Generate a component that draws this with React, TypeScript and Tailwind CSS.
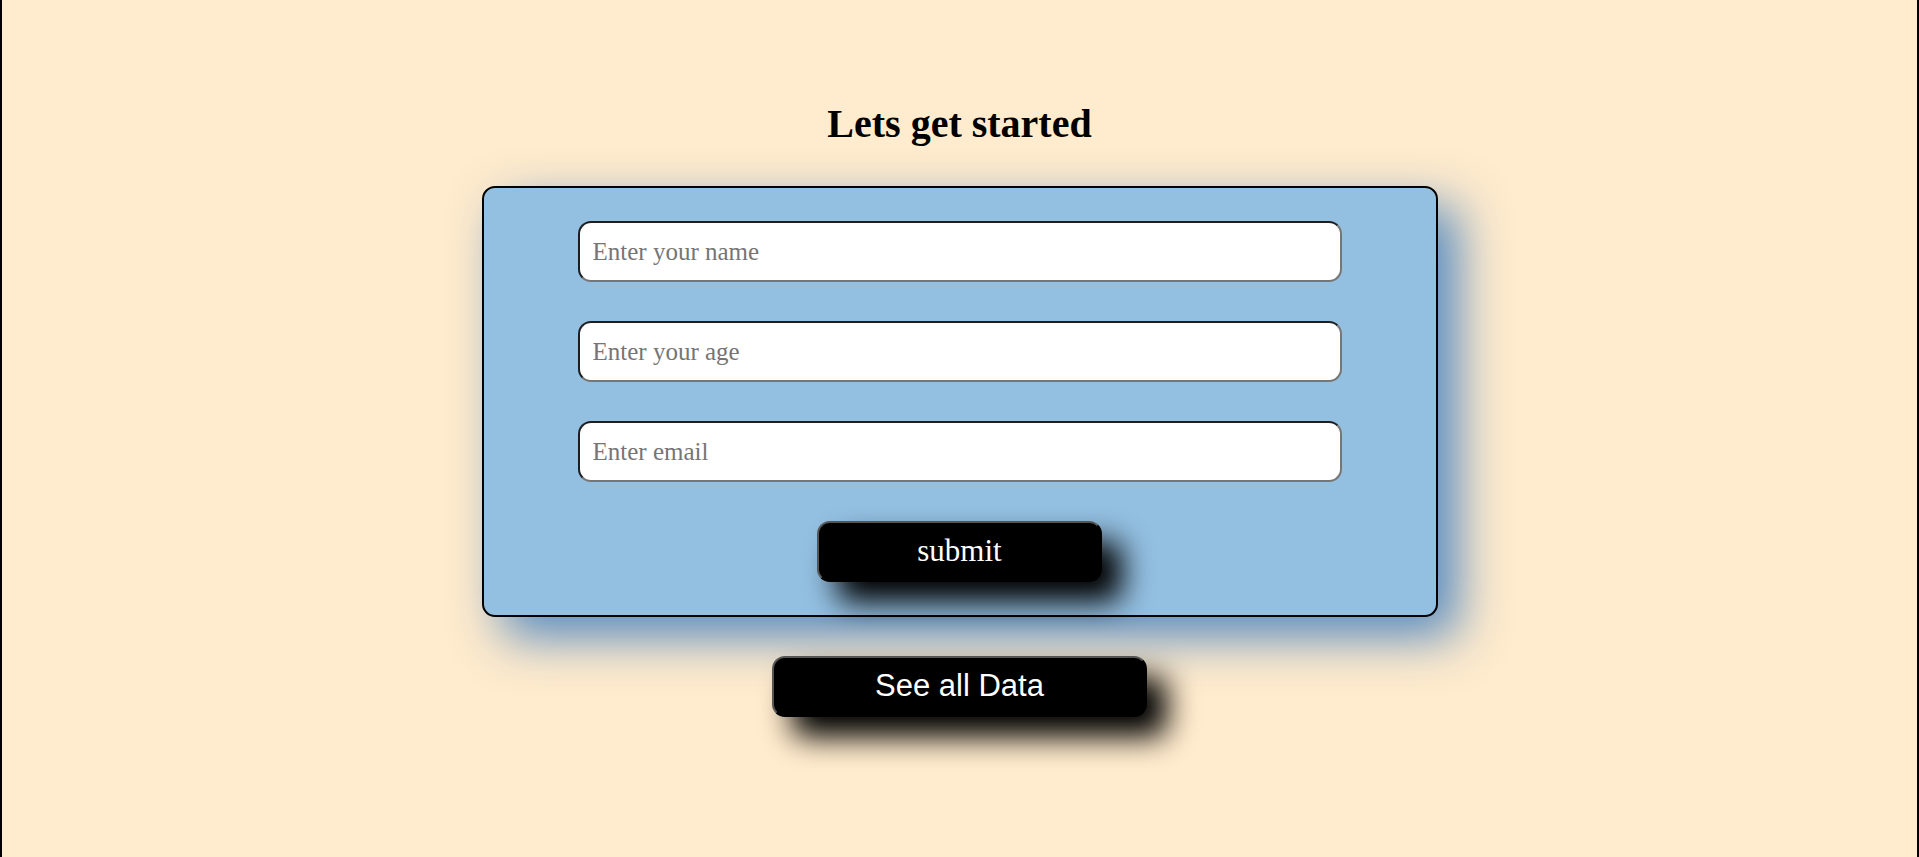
import React from 'react';

const inputClass =
  "w-[764px] h-[61px] rounded-[13px] border-2 border-solid border-t-[#1e1e1e] border-l-[#1e1e1e] border-b-[#767676] border-r-[#767676] bg-white pl-[13px] text-[25px] text-black placeholder:text-[#757575] outline-none font-['Liberation_Serif',serif]";

export default function App() {
  return (
    <div className="min-h-screen w-full bg-[#ffebcd] border-x-2 border-black flex flex-col items-center pt-[101px]">
      <h1 className="h-[46px] leading-[46px] text-[40px] font-bold text-black font-['Liberation_Serif',serif]">
        Lets get started
      </h1>

      <form
        className="mt-[39px] w-[956px] rounded-[13px] border-2 border-black bg-[#93bfe1] pt-[33px] pb-[33px] flex flex-col items-center gap-[39px] shadow-[20px_20px_50px_rgb(85,138,192)]"
        onSubmit={(e) => e.preventDefault()}
      >
        <input type="text" placeholder="Enter your name" className={inputClass} />
        <input type="text" placeholder="Enter your age" className={inputClass} />
        <input type="email" placeholder="Enter email" className={inputClass} />
        <button
          type="submit"
          className="w-[285px] h-[61px] rounded-[13px] border-2 border-solid border-t-[#555] border-l-[#555] border-b-black border-r-black bg-black text-white text-[31px] font-['Liberation_Serif',serif] shadow-[20px_20px_30px_#000]"
        >
          submit
        </button>
      </form>

      <button
        type="button"
        className="mt-[39px] w-[375px] h-[61px] rounded-[13px] border-2 border-solid border-t-[#555] border-l-[#555] border-b-black border-r-black bg-black text-white text-[31px] font-['Liberation_Sans',Arial,sans-serif] shadow-[20px_20px_30px_#000]"
      >
        See all Data
      </button>
    </div>
  );
}
